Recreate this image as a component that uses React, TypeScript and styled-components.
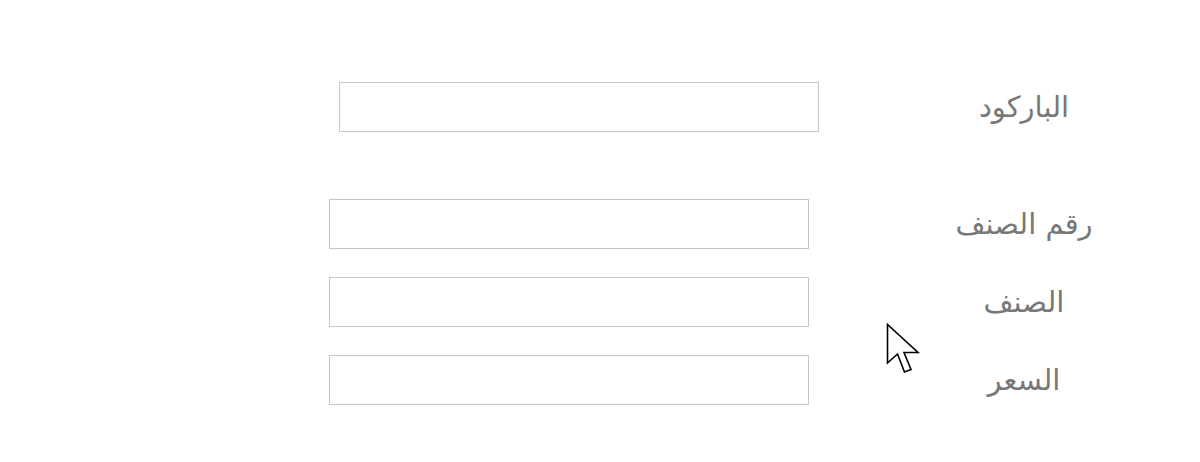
import styled, { createGlobalStyle } from 'styled-components';

const GlobalStyle = createGlobalStyle`
    html, body {
        margin: 0;
        padding: 0;
        background: #ffffff;
    }
`;

const Page = styled.div`
    position: relative;
    width: 1200px;
    height: 462px;
    overflow: hidden;
    background: #ffffff;
    font-family: "DejaVu Sans", "Noto Sans", sans-serif;
`;

const Form = styled.form`
    direction: rtl;
    display: flex;
    flex-direction: column;
    padding-top: 82px;
    padding-right: 86px;
`;

const Section = styled.div<{ $gap: number; $mb: number }>`
    display: flex;
    flex-direction: column;
    gap: ${(p) => p.$gap}px;
    margin-bottom: ${(p) => p.$mb}px;
`;

const Row = styled.div`
    display: flex;
    align-items: center;
    height: 50px;
`;

const Label = styled.label`
    width: 180px;
    text-align: center;
    font-size: 29px;
    color: #787878;
    line-height: 50px;
`;

const Field = styled.input<{ $offset: number }>`
    box-sizing: border-box;
    width: 480px;
    height: 50px;
    margin-right: ${(p) => p.$offset}px;
    border: 1px solid #c6c6c6;
    background: #ffffff;
    outline: none;
    padding: 0 10px;
    font-size: 18px;
`;

const Cursor = styled.svg`
    position: absolute;
    left: 886px;
    top: 323px;
    pointer-events: none;
`;

export default function App() {
    return (
        <Page>
            <GlobalStyle />
            <Form>
                <Section $gap={0} $mb={67}>
                    <Row>
                        <Label>الباركود</Label>
                        <Field $offset={115} />
                    </Row>
                </Section>
                <Section $gap={28} $mb={0}>
                    <Row>
                        <Label>رقم الصنف</Label>
                        <Field $offset={125} />
                    </Row>
                    <Row>
                        <Label>الصنف</Label>
                        <Field $offset={125} />
                    </Row>
                    <Row>
                        <Label>السعر</Label>
                        <Field $offset={125} />
                    </Row>
                </Section>
            </Form>
            <Cursor width="36" height="52" viewBox="0 0 36 52">
                <path
                    d="M1.5 1.5 L1.5 40 L11.5 31 L18.5 49 L25 46.5 L18 29.5 L32 29.5 Z"
                    fill="#ffffff"
                    stroke="#000000"
                    strokeWidth="1.6"
                    strokeLinejoin="miter"
                />
            </Cursor>
        </Page>
    );
}
